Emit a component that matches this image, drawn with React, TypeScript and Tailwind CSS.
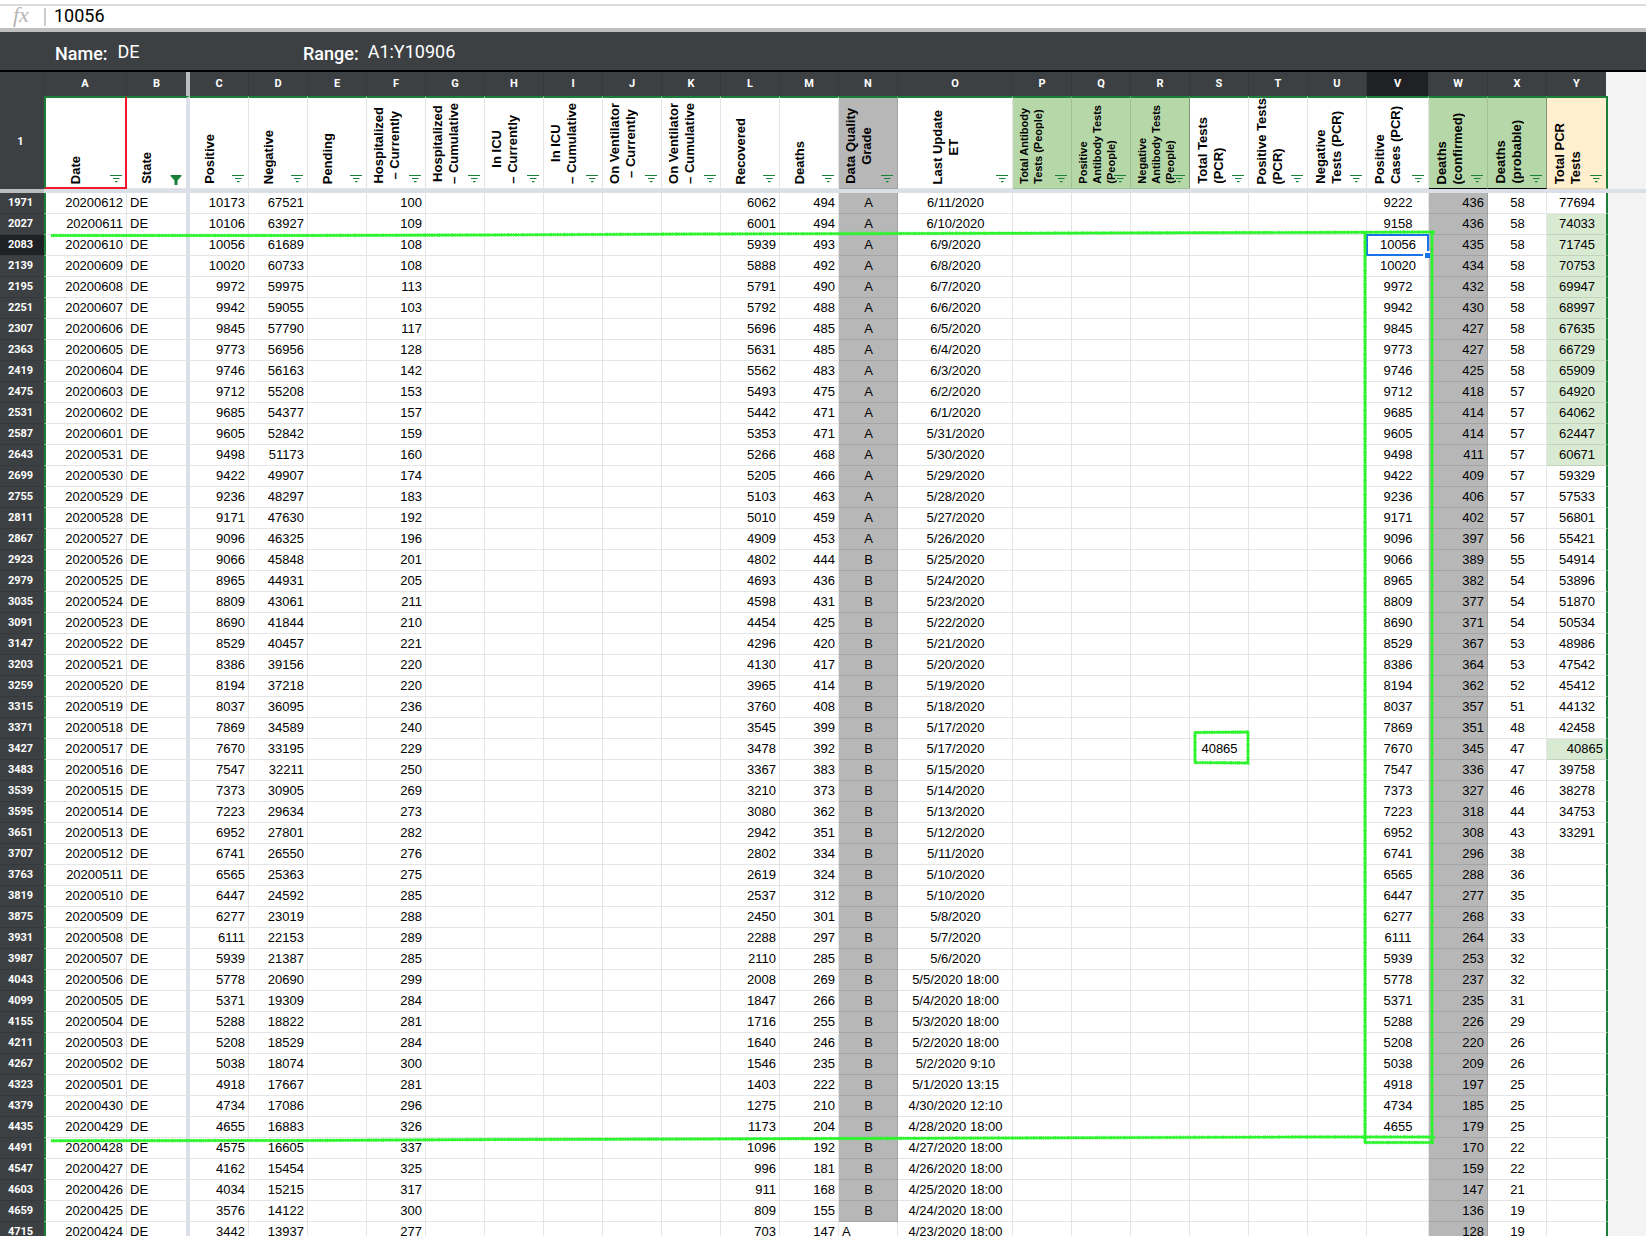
import React from "react";

type Align = "left" | "center" | "right";

type Column = {
  letter: string;
  width: string;
  lines: string[];
  field?: number;
  align: Align;
  header: string;
  label: "center" | "left" | "small";
};

const W59 = "w-[59px]";

const columns: Column[] = [
  { letter: "A", width: "w-[83px]", lines: ["Date"], field: 1, align: "right", header: "bg-white", label: "center" },
  { letter: "B", width: "w-[63px]", lines: ["State"], field: 2, align: "left", header: "bg-white", label: "center" },
  { letter: "C", width: W59, lines: ["Positive"], field: 3, align: "right", header: "bg-white", label: "center" },
  { letter: "D", width: W59, lines: ["Negative"], field: 4, align: "right", header: "bg-white", label: "center" },
  { letter: "E", width: W59, lines: ["Pending"], align: "right", header: "bg-white", label: "center" },
  { letter: "F", width: W59, lines: ["Hospitalized", "– Currently"], field: 5, align: "right", header: "bg-white", label: "center" },
  { letter: "G", width: W59, lines: ["Hospitalized", "– Cumulative"], align: "right", header: "bg-white", label: "center" },
  { letter: "H", width: W59, lines: ["In ICU", "– Currently"], align: "right", header: "bg-white", label: "center" },
  { letter: "I", width: W59, lines: ["In ICU", "– Cumulative"], align: "right", header: "bg-white", label: "center" },
  { letter: "J", width: W59, lines: ["On Ventilator", "– Currently"], align: "right", header: "bg-white", label: "center" },
  { letter: "K", width: W59, lines: ["On Ventilator", "– Cumulative"], align: "right", header: "bg-white", label: "center" },
  { letter: "L", width: W59, lines: ["Recovered"], field: 6, align: "right", header: "bg-white", label: "center" },
  { letter: "M", width: W59, lines: ["Deaths"], field: 7, align: "right", header: "bg-white", label: "center" },
  { letter: "N", width: W59, lines: ["Data Quality", "Grade"], field: 8, align: "center", header: "bg-[#b7b7b7]", label: "center" },
  { letter: "O", width: "w-[115px]", lines: ["Last Update", "ET"], field: 9, align: "center", header: "bg-white", label: "center" },
  { letter: "P", width: W59, lines: ["Total Antibody", "Tests (People)"], align: "center", header: "bg-[#b6d7a8]", label: "small" },
  { letter: "Q", width: W59, lines: ["Positive", "Antibody Tests", "(People)"], align: "center", header: "bg-[#b6d7a8]", label: "small" },
  { letter: "R", width: W59, lines: ["Negative", "Antibody Tests", "(People)"], align: "center", header: "bg-[#b6d7a8]", label: "small" },
  { letter: "S", width: W59, lines: ["Total Tests", "(PCR)"], align: "center", header: "bg-white", label: "left" },
  { letter: "T", width: W59, lines: ["Positive Tests", "(PCR)"], align: "center", header: "bg-white", label: "left" },
  { letter: "U", width: W59, lines: ["Negative", "Tests (PCR)"], align: "center", header: "bg-white", label: "left" },
  { letter: "V", width: "w-[62px]", lines: ["Positive", "Cases (PCR)"], field: 10, align: "center", header: "bg-white", label: "left" },
  { letter: "W", width: W59, lines: ["Deaths", "(confirmed)"], field: 11, align: "right", header: "bg-[#b6d7a8]", label: "left" },
  { letter: "X", width: W59, lines: ["Deaths", "(probable)"], field: 12, align: "center", header: "bg-[#b6d7a8]", label: "left" },
  { letter: "Y", width: "w-[61px]", lines: ["Total PCR", "Tests"], field: 13, align: "center", header: "bg-[#ffefcf]", label: "left" },
];

// row | date | state | C | D | F | L | M | N | O | V | W | X | Y
const source = `
1971|20200612|DE|10173|67521|100|6062|494|A|6/11/2020|9222|436|58|77694
2027|20200611|DE|10106|63927|109|6001|494|A|6/10/2020|9158|436|58|74033
2083|20200610|DE|10056|61689|108|5939|493|A|6/9/2020|10056|435|58|71745
2139|20200609|DE|10020|60733|108|5888|492|A|6/8/2020|10020|434|58|70753
2195|20200608|DE|9972|59975|113|5791|490|A|6/7/2020|9972|432|58|69947
2251|20200607|DE|9942|59055|103|5792|488|A|6/6/2020|9942|430|58|68997
2307|20200606|DE|9845|57790|117|5696|485|A|6/5/2020|9845|427|58|67635
2363|20200605|DE|9773|56956|128|5631|485|A|6/4/2020|9773|427|58|66729
2419|20200604|DE|9746|56163|142|5562|483|A|6/3/2020|9746|425|58|65909
2475|20200603|DE|9712|55208|153|5493|475|A|6/2/2020|9712|418|57|64920
2531|20200602|DE|9685|54377|157|5442|471|A|6/1/2020|9685|414|57|64062
2587|20200601|DE|9605|52842|159|5353|471|A|5/31/2020|9605|414|57|62447
2643|20200531|DE|9498|51173|160|5266|468|A|5/30/2020|9498|411|57|60671
2699|20200530|DE|9422|49907|174|5205|466|A|5/29/2020|9422|409|57|59329
2755|20200529|DE|9236|48297|183|5103|463|A|5/28/2020|9236|406|57|57533
2811|20200528|DE|9171|47630|192|5010|459|A|5/27/2020|9171|402|57|56801
2867|20200527|DE|9096|46325|196|4909|453|A|5/26/2020|9096|397|56|55421
2923|20200526|DE|9066|45848|201|4802|444|B|5/25/2020|9066|389|55|54914
2979|20200525|DE|8965|44931|205|4693|436|B|5/24/2020|8965|382|54|53896
3035|20200524|DE|8809|43061|211|4598|431|B|5/23/2020|8809|377|54|51870
3091|20200523|DE|8690|41844|210|4454|425|B|5/22/2020|8690|371|54|50534
3147|20200522|DE|8529|40457|221|4296|420|B|5/21/2020|8529|367|53|48986
3203|20200521|DE|8386|39156|220|4130|417|B|5/20/2020|8386|364|53|47542
3259|20200520|DE|8194|37218|220|3965|414|B|5/19/2020|8194|362|52|45412
3315|20200519|DE|8037|36095|236|3760|408|B|5/18/2020|8037|357|51|44132
3371|20200518|DE|7869|34589|240|3545|399|B|5/17/2020|7869|351|48|42458
3427|20200517|DE|7670|33195|229|3478|392|B|5/17/2020|7670|345|47|40865
3483|20200516|DE|7547|32211|250|3367|383|B|5/15/2020|7547|336|47|39758
3539|20200515|DE|7373|30905|269|3210|373|B|5/14/2020|7373|327|46|38278
3595|20200514|DE|7223|29634|273|3080|362|B|5/13/2020|7223|318|44|34753
3651|20200513|DE|6952|27801|282|2942|351|B|5/12/2020|6952|308|43|33291
3707|20200512|DE|6741|26550|276|2802|334|B|5/11/2020|6741|296|38|
3763|20200511|DE|6565|25363|275|2619|324|B|5/10/2020|6565|288|36|
3819|20200510|DE|6447|24592|285|2537|312|B|5/10/2020|6447|277|35|
3875|20200509|DE|6277|23019|288|2450|301|B|5/8/2020|6277|268|33|
3931|20200508|DE|6111|22153|289|2288|297|B|5/7/2020|6111|264|33|
3987|20200507|DE|5939|21387|285|2110|285|B|5/6/2020|5939|253|32|
4043|20200506|DE|5778|20690|299|2008|269|B|5/5/2020 18:00|5778|237|32|
4099|20200505|DE|5371|19309|284|1847|266|B|5/4/2020 18:00|5371|235|31|
4155|20200504|DE|5288|18822|281|1716|255|B|5/3/2020 18:00|5288|226|29|
4211|20200503|DE|5208|18529|284|1640|246|B|5/2/2020 18:00|5208|220|26|
4267|20200502|DE|5038|18074|300|1546|235|B|5/2/2020 9:10|5038|209|26|
4323|20200501|DE|4918|17667|281|1403|222|B|5/1/2020 13:15|4918|197|25|
4379|20200430|DE|4734|17086|296|1275|210|B|4/30/2020 12:10|4734|185|25|
4435|20200429|DE|4655|16883|326|1173|204|B|4/28/2020 18:00|4655|179|25|
4491|20200428|DE|4575|16605|337|1096|192|B|4/27/2020 18:00||170|22|
4547|20200427|DE|4162|15454|325|996|181|B|4/26/2020 18:00||159|22|
4603|20200426|DE|4034|15215|317|911|168|B|4/25/2020 18:00||147|21|
4659|20200425|DE|3576|14122|300|809|155|B|4/24/2020 18:00||136|19|
4715|20200424|DE|3442|13937|277|703|147|A|4/23/2020 18:00||128|19|
`;

const rows = source.trim().split("\n").map((line) => line.split("|"));

const alignClass: Record<Align, string> = {
  left: "text-left pl-[3px]",
  center: "text-center pl-px",
  right: "text-right pr-[3px]",
};

function FilterIcon({ active }: { active: boolean }) {
  if (active) {
    return (
      <svg width="12" height="10" viewBox="0 0 12 10" fill="#188038" aria-hidden="true">
        <path d="M0.5 0H11.5V1L7.5 5.5V10H4.5V5.5L0.5 1Z" />
      </svg>
    );
  }
  return (
    <svg width="12" height="8" viewBox="0 0 12 8" fill="#188038" aria-hidden="true">
      <path d="M0 0H12V1H0ZM3 3H9.5V4H3ZM5 6H7.5V7.2H5Z" />
    </svg>
  );
}

function HeaderLabel({ column }: { column: Column }) {
  const box =
    column.label === "center"
      ? "justify-center pr-[19px]"
      : column.label === "left"
        ? "pl-[5px]"
        : "pl-1";
  const text =
    column.label === "center"
      ? "text-center text-[13px] leading-[16px]"
      : column.label === "left"
        ? "text-left text-[13px] leading-[16px]"
        : "text-left text-[11px] leading-[14px]";
  return (
    <div className={`flex h-[89px] items-end pb-[3px] ${box}`}>
      <span className={`rotate-180 whitespace-nowrap font-bold text-black [writing-mode:vertical-rl] ${text}`}>
        {column.lines.map((line) => (
          <span key={line} className="block">
            {line}
          </span>
        ))}
      </span>
    </div>
  );
}

function letterBorder(letter: string) {
  if (letter === "B") return "border-r-4 border-[#bdbdbd]";
  if (letter === "Y") return "border-r-2 border-[#f3f3f3]";
  return "border-r border-[#36393c]";
}

function headerBorder(letter: string) {
  switch (letter) {
    case "A":
      return "border-l-2 border-l-[#188038] border-r-2 border-r-[#f4142c] border-b-2 border-b-[#f4142c]";
    case "B":
      return "border-r-4 border-r-[#dadfe8] border-b border-b-black/10";
    case "R":
      return "border-r border-r-black/30 border-b border-b-black/10";
    case "W":
      return "border-r border-r-black/10 border-b border-b-black";
    case "X":
      return "border-r border-r-black/30 border-b border-b-black";
    case "Y":
      return "border-r-2 border-r-[#188038] border-b border-b-black/10";
    default:
      return "border-r border-r-black/10 border-b border-b-black/10";
  }
}

function iconPosition(letter: string) {
  if (letter === "A") return "right-[3px] bottom-1";
  if (letter === "B") return "right-1 bottom-[3px]";
  return "right-1 bottom-[5px]";
}

function cellBorder(letter: string) {
  switch (letter) {
    case "A":
      return "border-l-2 border-l-[#188038] border-r border-r-black/10";
    case "B":
      return "border-r-4 border-r-[#dadfe8]";
    case "Y":
      return "border-r-2 border-r-[#188038]";
    default:
      return "border-r border-r-black/10";
  }
}

function Cell({ column, row, index }: { column: Column; row: string[]; index: number }) {
  const { letter } = column;
  const last = index === rows.length - 1;
  const isBalanceRow = row[0] === "3427";
  let value = column.field === undefined ? "" : row[column.field];
  let align = column.align;
  let bg = "bg-white";

  if (letter === "S" && isBalanceRow) value = "40865";
  if (letter === "N") {
    if (last) align = "left";
    else bg = "bg-[#b7b7b7]";
  }
  if (letter === "W") bg = "bg-[#b7b7b7]";
  if (letter === "Y") {
    if ((index > 0 && index < 13) || isBalanceRow) bg = "bg-[#d9ead3]";
    if (isBalanceRow) align = "right";
  }
  const selected = letter === "V" && row[0] === "2083";

  return (
    <td
      className={`h-[21px] whitespace-nowrap border-b border-b-black/10 p-0 ${cellBorder(letter)} ${bg} ${alignClass[align]} ${selected ? "relative" : ""}`}
    >
      {value}
      {selected && (
        <>
          <span className="absolute -inset-px border-2 border-[#1a73e8]" />
          <span className="absolute -right-[2px] -bottom-[3px] size-[7px] border-t-2 border-l-2 border-white bg-[#1a73e8]" />
        </>
      )}
    </td>
  );
}

const strokes = [
  "M51 163.5L300 163.5L480 163L700 162L1000 161.3L1300 160.5L1435 160",
  "M51 1068.7L300 1068.5L500 1067.5L700 1067L1000 1066L1300 1065L1435 1065",
  "M1365 161V1071",
  "M1432 160V1071",
  "M1364 1070.5L1434 1070.5",
  "M1195 660.5L1248 660V691L1195 690.5Z",
];

function Marker() {
  return (
    <svg className="pointer-events-none absolute inset-0 h-full w-full" fill="none" stroke="#2df52d" aria-hidden="true">
      {strokes.map((d) => (
        <g key={d}>
          <path d={d} strokeWidth="2.4" />
          <path d={d} strokeWidth="3.6" strokeDasharray="1 1 2 1 1 2 3 1 1 1" strokeOpacity="0.6" />
        </g>
      ))}
    </svg>
  );
}

export default function App() {
  return (
    <main className="flex h-screen flex-col overflow-hidden bg-[#f3f3f3] font-['Roboto',sans-serif]">
      <div className="shrink-0 bg-white pt-1">
        <div className="flex h-6 items-start border-t-2 border-[#dadce0]">
          <label
            htmlFor="formula"
            className="mt-0.5 flex h-[18px] w-[46px] items-center border-r-2 border-[#cccccc] pb-1 pl-[13px] font-['Liberation_Serif',serif] text-[22px] italic leading-[18px] text-[#b5b5b5]"
          >
            fx
          </label>
          <input
            id="formula"
            defaultValue="10056"
            className="h-5 flex-1 bg-transparent pl-2 text-[18px] leading-[20px] text-black outline-none"
          />
        </div>
      </div>
      <div className="flex h-11 shrink-0 items-center border-t-4 border-b-2 border-t-[#bfbfbf] border-b-black bg-[#3c4043] pt-1 pl-[55px] text-[18px] leading-[22px] text-white">
        <div className="flex w-[248px] gap-[10px]">
          <span className="pt-0.5 font-medium">Name:</span>
          <span>DE</span>
        </div>
        <div className="flex gap-[9px]">
          <span className="pt-0.5 font-medium">Range:</span>
          <span>A1:Y10906</span>
        </div>
      </div>
      <div className="relative shrink-0">
        <table className="w-full table-fixed border-separate border-spacing-0 font-['Liberation_Sans',Arial,sans-serif] text-[13px] leading-[20px] text-black">
          <colgroup>
            <col className="w-[44px]" />
            {columns.map((c) => (
              <col key={c.letter} className={c.width} />
            ))}
            <col />
          </colgroup>
          <thead>
            <tr className="font-['Roboto',sans-serif] text-[11px] text-white">
              <td className="h-6 border-r border-[#36393c] bg-[#3c4043] p-0" />
              {columns.map((c) => (
                <th
                  key={c.letter}
                  scope="col"
                  className={`h-6 p-0 text-center font-bold ${c.letter === "V" ? "bg-[#202124]" : "bg-[#3c4043]"} ${letterBorder(c.letter)}`}
                >
                  {c.letter}
                </th>
              ))}
              <td className="p-0" />
            </tr>
            <tr>
              <th scope="row" className="bg-[#3c4043] p-0 pr-[3px] pb-0.5 font-['Roboto',sans-serif] text-[11px] font-bold text-white">
                1
              </th>
              {columns.map((c) => (
                <th
                  key={c.letter}
                  className={`relative h-[92px] border-t-2 border-t-[#188038] p-0 align-top ${headerBorder(c.letter)} ${c.header}`}
                >
                  <HeaderLabel column={c} />
                  <button
                    type="button"
                    aria-label={`Filter ${c.lines.join(" ")}`}
                    className={`absolute flex ${iconPosition(c.letter)}`}
                  >
                    <FilterIcon active={c.letter === "B"} />
                  </button>
                </th>
              ))}
              <td className="p-0" />
            </tr>
            <tr>
              <td className="h-1 bg-[#bdbdbd] p-0" />
              <td colSpan={columns.length + 1} className="h-1 bg-[#dadfe8] p-0" />
            </tr>
          </thead>
          <tbody>
            {rows.map((row, index) => (
              <tr key={row[0]}>
                <th
                  scope="row"
                  className={`border-b border-[#36393c] p-0 pr-[3px] font-['Roboto',sans-serif] text-[11px] font-bold text-white ${
                    row[0] === "2083" ? "bg-[#202124]" : "bg-[#3c4043]"
                  }`}
                >
                  {row[0]}
                </th>
                {columns.map((c) => (
                  <Cell key={c.letter} column={c} row={row} index={index} />
                ))}
                <td className="p-0" />
              </tr>
            ))}
          </tbody>
        </table>
        <Marker />
      </div>
    </main>
  );
}
